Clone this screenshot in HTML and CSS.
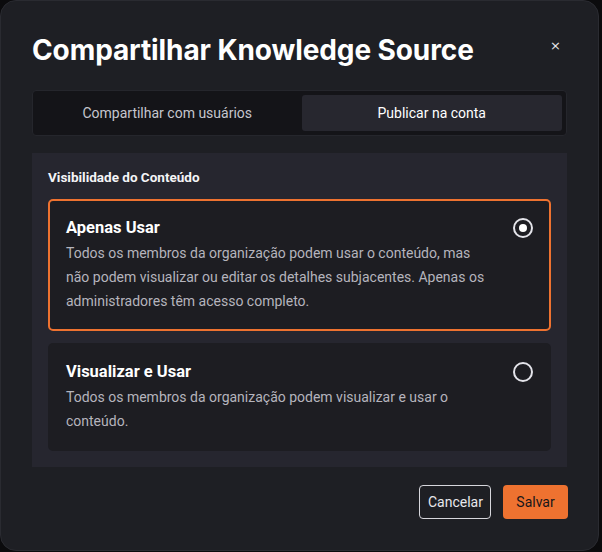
FILE: index.html
```html
<!DOCTYPE html>
<html lang="pt">
<head>
<meta charset="utf-8">
<title>Compartilhar Knowledge Source</title>
<link rel="stylesheet" href="styles.css">
</head>
<body>
<div class="modal">
  <div class="header">
    <h1 class="title">Compartilhar Knowledge Source</h1>
    <button class="close" aria-label="Fechar">×</button>
  </div>
  <div class="tabs">
    <div class="tab">Compartilhar com usuários</div>
    <div class="tab active">Publicar na conta</div>
  </div>
  <div class="panel">
    <div class="label">Visibilidade do Conteúdo</div>
    <div class="option selected">
      <div class="option-text">
        <div class="option-title">Apenas Usar</div>
        <div class="option-desc">Todos os membros da organização podem usar o conteúdo, mas não podem visualizar ou editar os detalhes subjacentes. Apenas os administradores têm acesso completo.</div>
      </div>
      <span class="radio checked"></span>
    </div>
    <div class="option">
      <div class="option-text">
        <div class="option-title">Visualizar e Usar</div>
        <div class="option-desc">Todos os membros da organização podem visualizar e usar o conteúdo.</div>
      </div>
      <span class="radio"></span>
    </div>
  </div>
  <div class="footer">
    <button class="btn btn-outline">Cancelar</button>
    <button class="btn btn-primary">Salvar</button>
  </div>
</div>
</body>
</html>
```
FILE: styles.css
```css
* { box-sizing: border-box; }
html, body { margin: 0; padding: 0; }
body {
  background: #0b0b0d;
  width: 602px;
  height: 552px;
  font-family: Roboto, "Liberation Sans", sans-serif;
  color: #f2f2f4;
}
.modal {
  width: 599px;
  height: 551px;
  background: #1e1f24;
  border: 1px solid #2a2b31;
  border-radius: 16px;
  padding: 31px 31px 31px 31px;
  display: flex;
  flex-direction: column;
}
.header {
  display: flex;
  align-items: center;
  justify-content: space-between;
  height: 36px;
  margin-bottom: 22px;
}
.title {
  margin: 0;
  font-family: Inter, "Liberation Sans", sans-serif;
  font-weight: 700;
  font-size: 28px;
  line-height: 36px;
  color: #ffffff;
  letter-spacing: -0.1px;
}
.close {
  background: none;
  border: none;
  color: #e6e6ea;
  font-size: 13px;
  padding: 0;
  margin-right: 6px;
  margin-top: -9px;
  font-family: "DejaVu Sans", sans-serif;
}
.tabs {
  display: grid;
  grid-template-columns: 1fr 1fr;
  gap: 4px;
  padding: 4px;
  background: #141418;
  border: 1px solid #25262c;
  border-radius: 4px;
  height: 47px;
  margin-bottom: 17px;
}
.tab {
  display: flex;
  align-items: center;
  justify-content: center;
  font-size: 14px;
  color: #c6c6ce;
  border-radius: 3px;
}
.tab.active {
  background: #27272f;
  color: #ffffff;
}
.panel {
  background: #26262f;
  padding: 16px;
  display: flex;
  flex-direction: column;
  gap: 12px;
}
.label {
  font-size: 13.5px;
  font-weight: 700;
  line-height: 16px;
  color: #f4f4f6;
  margin-bottom: 2px;
}
.option {
  display: flex;
  align-items: flex-start;
  gap: 24px;
  background: #1d1d22;
  border: 2px solid transparent;
  border-radius: 5px;
  padding: 16px 16px 16px 16px;
}
.option.selected {
  border-color: #ee7230;
}
.option-text { flex: 1; }
.option-title {
  font-weight: 700;
  font-size: 16.5px;
  line-height: 21px;
  color: #ffffff;
  margin-bottom: 3px;
}
.option-desc {
  font-size: 14px;
  line-height: 24px;
  color: #b5b4bd;
}
.radio {
  width: 20px;
  height: 20px;
  border: 2px solid #e4e4ea;
  border-radius: 50%;
  flex: none;
  display: flex;
  align-items: center;
  justify-content: center;
  margin-top: 1px;
}
.radio.checked::after {
  content: "";
  width: 8px;
  height: 8px;
  border-radius: 50%;
  background: #ffffff;
}
.footer {
  display: flex;
  justify-content: flex-end;
  gap: 12px;
  margin-top: 18px;
  margin-right: -1px;
}
.btn {
  height: 34px;
  padding: 0 8px;
  font-family: Roboto, "Liberation Sans", sans-serif;
  font-size: 14px;
  border-radius: 4px;
}
.btn-outline {
  background: transparent;
  border: 1px solid #d6d6dc;
  color: #e8e8ec;
  width: 72px;
}
.btn-primary {
  background: #ee7230;
  border: none;
  color: #16161a;
  width: 65px;
}
```
